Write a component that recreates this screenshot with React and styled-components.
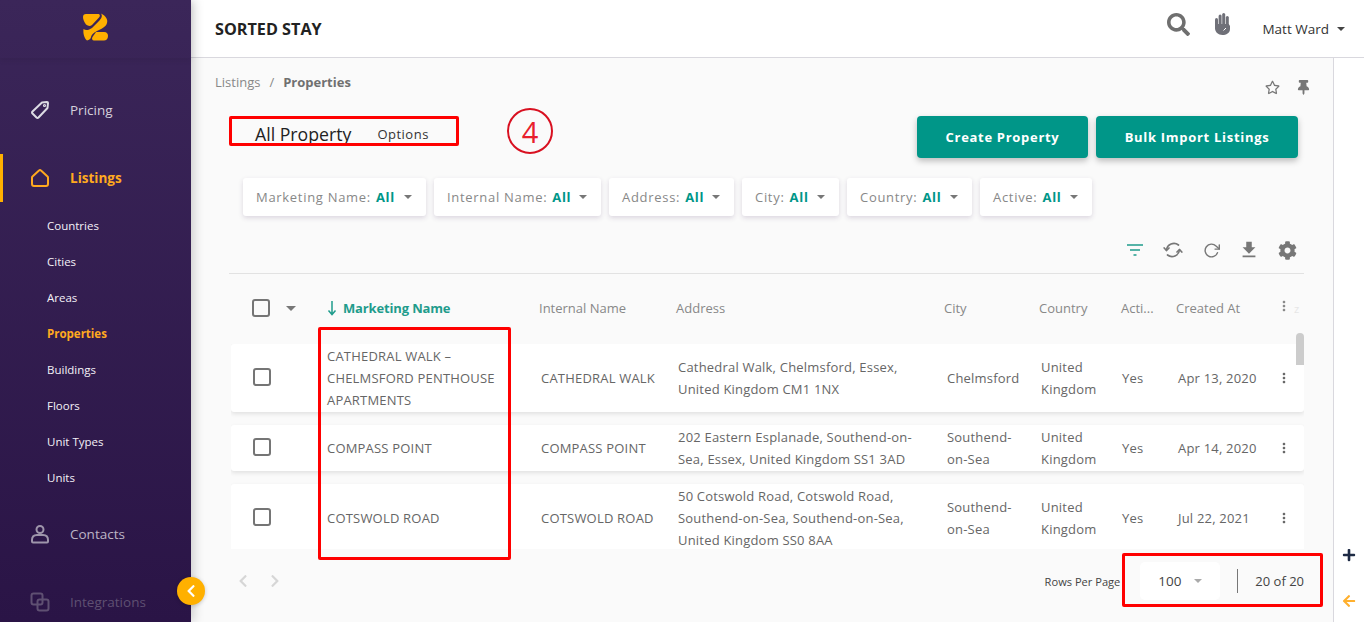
import React from 'react';
import styled, { createGlobalStyle } from 'styled-components';
import { FaSearch, FaRegStar, FaCog, FaPlus, FaArrowLeft, FaChevronLeft, FaChevronRight, FaThumbtack } from 'react-icons/fa';
import { FiRotateCw } from 'react-icons/fi';
import { MdFileDownload, MdMoreVert } from 'react-icons/md';

const GlobalStyle = createGlobalStyle`
  html, body { margin: 0; padding: 0; height: 100%; overflow: hidden; }
  body { font-family: "Open Sans", "Noto Sans", "Liberation Sans", sans-serif; background: #fafafa; color: #555; }
  * { box-sizing: border-box; }
`;

const Page = styled.div`
  display: flex;
  width: 1364px;
  height: 622px;
  position: relative;
  overflow: hidden;
`;

const Sidebar = styled.aside`
  position: relative;
  width: 191px;
  flex: none;
  background: linear-gradient(180deg, #3b2659 0%, #2a1446 100%);
  box-shadow: 3px 0 10px rgba(0, 0, 0, 0.18);
  z-index: 2;
`;

const LogoBar = styled.div`
  height: 58px;
  display: flex;
  justify-content: center;
  align-items: center;
  box-shadow: 0 2px 6px rgba(0, 0, 0, 0.08);
  padding-bottom: 4px;
`;

const NavMain = styled.div`
  display: flex;
  align-items: center;
  height: 48px;
  padding-left: ${p => (p.$active ? '27px' : '30px')};
  border-left: ${p => (p.$active ? '3px solid #ffb000' : 'none')};
  margin-top: ${p => p.$top}px;
  color: ${p => (p.$active ? '#ffa91f' : p.$dim ? '#5f5072' : '#d5d0dc')};
  font-weight: ${p => (p.$active ? 700 : 400)};
  font-size: 13.5px;
  opacity: ${p => (p.$soft ? 0.85 : 1)};
`;

const NavIcon = styled.span`
  display: flex;
  width: 40px;
  flex: none;
`;

const SubList = styled.div`
  display: flex;
  flex-direction: column;
  margin-top: 6px;
`;

const SubItem = styled.div`
  height: 36px;
  line-height: 36px;
  padding-left: 47px;
  font-size: 11.5px;
  font-weight: ${p => (p.$active ? 700 : 400)};
  color: ${p => (p.$active ? '#ffa91f' : '#f4f1f7')};
`;

const Collapse = styled.div`
  position: absolute;
  left: 177px;
  top: 577px;
  width: 28px;
  height: 28px;
  border-radius: 50%;
  background: #ffb000;
  color: #fff;
  display: flex;
  align-items: center;
  justify-content: center;
  box-shadow: 0 1px 4px rgba(0, 0, 0, 0.2);
  z-index: 3;
`;

const Main = styled.div`
  flex: 1;
  display: flex;
  flex-direction: column;
  min-width: 0;
`;

const Header = styled.header`
  height: 58px;
  flex: none;
  background: #fff;
  border-bottom: 1px solid #d9d8de;
  display: flex;
  align-items: center;
  padding: 0 19px 0 24px;
`;

const Brand = styled.div`
  font-size: 16.2px;
  font-weight: 700;
  color: #222;
  flex: 1;
`;

const HeaderIcon = styled.span`
  display: flex;
  color: #6f6f6f;
  margin-right: ${p => p.$gap}px;
  margin-top: ${p => p.$top}px;
`;

const User = styled.div`
  display: flex;
  align-items: center;
  font-size: 13.5px;
  color: #333;
  gap: 8px;
`;

const Caret = styled.span`
  flex: none;
  width: 0;
  height: 0;
  border-left: ${p => p.$size || 4}px solid transparent;
  border-right: ${p => p.$size || 4}px solid transparent;
  border-top: ${p => p.$size || 4}px solid ${p => p.$color || '#777'};
`;

const Body = styled.div`
  flex: 1;
  display: flex;
  min-height: 0;
`;

const Content = styled.div`
  flex: 1;
  min-width: 0;
  padding: 15px 29px 0 24px;
  display: flex;
  flex-direction: column;
  position: relative;
`;

const CrumbRow = styled.div`
  display: flex;
  justify-content: space-between;
  align-items: flex-start;
  height: 24px;
  font-size: 13px;
  color: #888;
`;

const Crumb = styled.div`
  b { color: #707070; font-weight: 700; }
  span { margin: 0 9px; }
`;

const PinBox = styled.div`
  display: flex;
  gap: 16px;
  align-items: center;
  color: #777;
  margin: 6px -7px 0 0;
  height: 16px;
`;

const TitleRow = styled.div`
  display: flex;
  justify-content: space-between;
  padding: 19px 6px 0 14px;
  height: 81px;
`;

const TitleGroup = styled.div`
  display: flex;
  align-items: flex-start;
  gap: 26px;
  padding: 6px 0 0 26px;
  height: 42px;
`;

const Title = styled.div`
  font-size: 17.7px;
  color: #222;
`;

const Options = styled.div`
  font-size: 13px;
  color: #333;
  letter-spacing: 0.5px;
  margin-top: 3px;
`;

const Actions = styled.div`
  display: flex;
  gap: 8px;
`;

const Primary = styled.button`
  width: ${p => p.$w}px;
  height: 42px;
  background: #009688;
  border: 0;
  border-radius: 4px;
  color: #fff;
  font: 700 13px "Open Sans", sans-serif;
  letter-spacing: 0.7px;
  box-shadow: 0 3px 6px rgba(0, 0, 0, 0.25);
`;

const Filters = styled.div`
  display: flex;
  gap: 8px;
  padding-left: 28px;
`;

const Chip = styled.div`
  height: 38px;
  width: ${p => p.$w}px;
  background: #fff;
  border-radius: 3px;
  box-shadow: 0 2px 5px rgba(60, 30, 90, 0.16);
  display: flex;
  align-items: center;
  justify-content: space-between;
  padding: 0 14px 0 13px;
  font-size: 13px;
  letter-spacing: 0.7px;
  color: #888;
  b { color: #009688; margin-left: 5px; }
`;

const Tools = styled.div`
  display: flex;
  justify-content: flex-end;
  align-items: center;
  gap: 4px;
  height: 58px;
  margin-left: 14px;
  padding-top: 11px;
  color: #777;
  border-bottom: 1px solid #e2e2e2;
`;

const Tool = styled.span`
  display: flex;
  justify-content: center;
  width: 34px;
`;

const COLS = '214px 137px 269px 94px 81px 56px 106px 1fr';

const HeadRow = styled.div`
  display: grid;
  grid-template-columns: 96px ${COLS};
  margin-left: 16px;
  height: 70px;
  align-items: center;
  font-size: 13px;
  color: #888;
  padding-bottom: 2px;
`;

const HeadCheck = styled.div`
  display: flex;
  align-items: center;
  gap: 16px;
  padding-left: 21px;
`;

const Box = styled.span`
  display: block;
  width: 18px;
  height: 18px;
  border: 2px solid #757575;
  border-radius: 3px;
  background: transparent;
`;

const SortHead = styled.div`
  display: flex;
  align-items: center;
  gap: 6px;
  color: #1f9c8c;
  font-weight: 700;
  letter-spacing: -0.15px;
`;

const HeadCell = styled.div`
  display: flex;
  align-items: center;
  margin-left: ${p => p.$left || 0}px;
  color: #888;
`;

const HeadDots = styled(MdMoreVert)`
  margin-bottom: 4px;
`;

const FaintSort = styled.span`
  color: #e6e6e6;
  font-size: 11px;
  margin-left: 2px;
`;

const Rows = styled.div`
  height: 205px;
  overflow: hidden;
  margin-left: 16px;
`;

const Row = styled.div`
  display: grid;
  grid-template-columns: 96px ${COLS};
  align-items: center;
  background: #fff;
  border-radius: 3px;
  box-shadow: 0 2px 4px rgba(0, 0, 0, 0.1);
  min-height: ${p => p.$h}px;
  margin-bottom: 13px;
  font-size: 13px;
  letter-spacing: 0.2px;
  line-height: 22px;
  color: #666;
`;

const CheckCell = styled.div`
  padding-left: 22px;
  margin-top: -2px;
`;

const RowDots = styled(MdMoreVert)`
  margin-left: -8px;
`;

const ScrollThumb = styled.div`
  position: absolute;
  right: 29px;
  top: 275px;
  width: 8px;
  height: 32px;
  background: #ccc;
  border-radius: 4px 4px 0 0;
`;

const Footer = styled.div`
  display: flex;
  align-items: center;
  margin-left: 16px;
  height: 54px;
  padding-top: 10px;
`;

const Pager = styled.div`
  display: flex;
  gap: 18px;
  color: #d6d6d6;
  flex: 1;
  padding-left: 5px;
`;

const RowsLabel = styled.div`
  font-size: 11.1px;
  color: #444;
  margin-right: 20px;
`;

const PageSelect = styled.div`
  width: 80px;
  height: 38px;
  background: #fff;
  border-radius: 5px;
  display: flex;
  align-items: center;
  padding-left: 18px;
  gap: 13px;
  font-size: 13.5px;
  color: #444;
`;

const Count = styled.div`
  margin-left: 17px;
  border-left: 1px solid #777;
  padding-left: 17px;
  height: 24px;
  line-height: 24px;
  font-size: 13px;
  color: #444;
`;

const Rail = styled.div`
  width: 31px;
  flex: none;
  border-left: 1px solid #d9d8de;
  background: #fff;
  display: flex;
  flex-direction: column;
  align-items: center;
  justify-content: flex-end;
  gap: 32px;
  padding-bottom: 14px;
`;

const Mark = styled.div`
  position: absolute;
  border: 3px solid #f00;
  border-radius: 2px;
  z-index: 4;
  pointer-events: none;
  left: ${p => p.$x}px;
  top: ${p => p.$y}px;
  width: ${p => p.$w}px;
  height: ${p => p.$h}px;
`;

const Circled = styled.div`
  position: absolute;
  left: 507px;
  top: 108px;
  width: 46px;
  height: 46px;
  border: 2px solid #d81020;
  border-radius: 50%;
  color: #e8202c;
  font-size: 29px;
  display: flex;
  align-items: center;
  justify-content: center;
  z-index: 4;
`;

const Logo = () => (
  <svg width="25" height="28" viewBox="0 0 25 28" fill="#ffb000">
    <path d="M3 1H15C17 1 17.500 3 16 4.500L9 12C7 13.500 5 13 3 11.500C1 9 0 6 0 4C0 2 1 1 3 1Z" />
    <path d="M18 .5C23 3 25 7 24 10C23 14 18 16 14 18C10 20 8.500 22 8 24C8 26 6 27 4 27.500C1 25 0 20 .5 16C3 18 6 17 9 15L16 8C18 6 20 3 18 .5Z" />
    <path d="M13 19H21C24 19 25 21 25 23C25 26 23 27.500 21 27.500H11C9 27.500 8.500 25.500 9.500 24Z" />
  </svg>
);

const TagIcon = () => (
  <svg width="20" height="20" viewBox="0 0 20 20" fill="none" stroke="#dcdce4" strokeWidth="2" strokeLinejoin="round">
    <path d="M12 2.500L17 2Q18 2 18 3L17.500 8L8.500 17.500Q7.500 18.500 6.500 17.500L2.500 13.500Q1.500 12.500 2.500 11.500Z" />
    <circle cx="14.500" cy="5.500" r=".6" />
  </svg>
);

const HomeIcon = () => (
  <svg width="20" height="20" viewBox="0 0 20 20" fill="none" stroke="#ffa91f" strokeWidth="2" strokeLinejoin="round">
    <path d="M2 16V9.500Q2 9 2.500 8.500L9 2.500Q10 1.500 11 2.500L17.500 8.500Q18 9 18 9.500V16Q18 18 16 18H4Q2 18 2 16Z" />
  </svg>
);

const ContactIcon = () => (
  <svg width="20" height="20" viewBox="0 0 20 20" fill="none" stroke="#b3acbd" strokeWidth="2">
    <circle cx="10" cy="5.500" r="3.500" />
    <path d="M2 16c0-3 2-5 5-5h6c3 0 5 2 5 5v1.500q0 1-1 1H3q-1 0-1-1z" />
  </svg>
);

const LinkIcon = () => (
  <svg width="20" height="20" viewBox="0 0 20 20" fill="none" stroke="#5f5072" strokeWidth="2">
    <rect x="1.500" y="1.500" width="11" height="11" rx="2" />
    <rect x="7.500" y="7.500" width="11" height="11" rx="2" />
  </svg>
);

const HandIcon = () => (
  <svg width="15" height="22" viewBox="0 0 15 22" fill="#6f7078">
    <rect x="0" y="5" width="3" height="11" rx="1.500" />
    <rect x="3.600" y="1.500" width="3" height="13" rx="1.500" />
    <rect x="7.200" y="0" width="3" height="14" rx="1.500" />
    <rect x="10.800" y="3" width="3" height="12" rx="1.500" />
    <path d="M0 11H13.800L15 13V16C15 20 11 22 7.500 22C3 22 0 19 0 15Z" />
    <path d="M8.500 17.500L11 15" stroke="#fff" strokeWidth="1" />
  </svg>
);

const FilterLines = () => (
  <svg width="18" height="14" viewBox="0 0 18 14" stroke="#1f9c8c" strokeWidth="1.500">
    <path d="M1 2h16M4 7h10M7.500 12h3" />
  </svg>
);

const SyncIcon = () => (
  <svg width="20" height="20" viewBox="0 0 20 20" fill="none" stroke="#777" strokeWidth="1.700" strokeLinecap="round" strokeLinejoin="round">
    <path d="M15.500 5A7.500 7.500 0 0 0 3.500 10" />
    <path d="M1.200 8L3.500 10.500L6 8" />
    <path d="M4.500 15A7.500 7.500 0 0 0 16.500 10" />
    <path d="M14 12L16.500 9.500L18.800 12" />
  </svg>
);

const filters = [
  ['Marketing Name:', 183],
  ['Internal Name:', 167],
  ['Address:', 125],
  ['City:', 97],
  ['Country:', 125],
  ['Active:', 112],
];

const rows = [
  {
    h: 68,
    name: ['CATHEDRAL WALK –', 'CHELMSFORD PENTHOUSE', 'APARTMENTS'],
    internal: 'CATHEDRAL WALK',
    address: ['Cathedral Walk, Chelmsford, Essex,', 'United Kingdom CM1 1NX'],
    city: ['Chelmsford'],
    created: 'Apr 13, 2020',
  },
  {
    h: 46,
    name: ['COMPASS POINT'],
    internal: 'COMPASS POINT',
    address: ['202 Eastern Esplanade, Southend-on-', 'Sea, Essex, United Kingdom SS1 3AD'],
    city: ['Southend-', 'on-Sea'],
    created: 'Apr 14, 2020',
  },
  {
    h: 68,
    name: ['COTSWOLD ROAD'],
    internal: 'COTSWOLD ROAD',
    address: ['50 Cotswold Road, Cotswold Road,', 'Southend-on-Sea, Southend-on-Sea,', 'United Kingdom SS0 8AA'],
    city: ['Southend-', 'on-Sea'],
    created: 'Jul 22, 2021',
  },
];

const Lines = ({ items }) => (
  <div>
    {items.map(t => (
      <div key={t}>{t}</div>
    ))}
  </div>
);

export default function App() {
  return (
    <Page>
      <GlobalStyle />
      <Sidebar>
        <LogoBar><Logo /></LogoBar>
        <NavMain $top={28}><NavIcon><TagIcon /></NavIcon>Pricing</NavMain>
        <NavMain $top={20} $active><NavIcon><HomeIcon /></NavIcon>Listings</NavMain>
        <SubList>
          <SubItem>Countries</SubItem>
          <SubItem>Cities</SubItem>
          <SubItem>Areas</SubItem>
          <SubItem $active>Properties</SubItem>
          <SubItem>Buildings</SubItem>
          <SubItem>Floors</SubItem>
          <SubItem>Unit Types</SubItem>
          <SubItem>Units</SubItem>
        </SubList>
        <NavMain $top={14} $soft><NavIcon><ContactIcon /></NavIcon>Contacts</NavMain>
        <NavMain $top={20} $dim><NavIcon><LinkIcon /></NavIcon>Integrations</NavMain>
      </Sidebar>
      <Collapse><FaChevronLeft size={14} /></Collapse>

      <Main>
        <Header>
          <Brand>SORTED STAY</Brand>
          <HeaderIcon $gap={25} $top={-8}><FaSearch size={23} /></HeaderIcon>
          <HeaderIcon $gap={32} $top={-9}><HandIcon /></HeaderIcon>
          <User>Matt Ward <Caret $color="#444" /></User>
        </Header>
        <Body>
          <Content>
            <CrumbRow>
              <Crumb>Listings<span>/</span><b>Properties</b></Crumb>
              <PinBox>
                <FaRegStar size={15} />
                <FaThumbtack size={15} />
              </PinBox>
            </CrumbRow>
            <TitleRow>
              <TitleGroup>
                <Title>All Property</Title>
                <Options>Options</Options>
              </TitleGroup>
              <Actions>
                <Primary $w={171}>Create Property</Primary>
                <Primary $w={202}>Bulk Import Listings</Primary>
              </Actions>
            </TitleRow>
            <Filters>
              {filters.map(([label, width]) => (
                <Chip key={label} $w={width}>
                  <span>{label}<b>All</b></span>
                  <Caret />
                </Chip>
              ))}
            </Filters>
            <Tools>
              <Tool><FilterLines /></Tool>
              <Tool><SyncIcon /></Tool>
              <Tool><FiRotateCw size={17} /></Tool>
              <Tool><MdFileDownload size={22} /></Tool>
              <Tool><FaCog size={19} /></Tool>
            </Tools>
            <HeadRow>
              <HeadCheck><Box /><Caret $size={5} /></HeadCheck>
              <SortHead>
                <svg width="10" height="16" viewBox="0 0 10 16" fill="none" stroke="#1f9c8c" strokeWidth="1.500">
                  <path d="M5 1v13M1.500 10.500L5 14.500l3.500-4" />
                </svg>
                Marketing Name
              </SortHead>
              <HeadCell $left={-2}>Internal Name</HeadCell>
              <HeadCell $left={-2}>Address</HeadCell>
              <HeadCell $left={-3}>City</HeadCell>
              <HeadCell $left={-2}>Country</HeadCell>
              <HeadCell $left={-1}>Acti...</HeadCell>
              <HeadCell $left={-2}>Created At</HeadCell>
              <HeadCell $left={-8}><HeadDots size={16} /><FaintSort>z</FaintSort></HeadCell>
            </HeadRow>
            <Rows>
              {rows.map(r => (
                <Row key={r.internal} $h={r.h}>
                  <CheckCell><Box /></CheckCell>
                  <Lines items={r.name} />
                  <div>{r.internal}</div>
                  <Lines items={r.address} />
                  <Lines items={r.city} />
                  <Lines items={['United', 'Kingdom']} />
                  <div>Yes</div>
                  <div>{r.created}</div>
                  <RowDots size={16} />
                </Row>
              ))}
            </Rows>
            <ScrollThumb />
            <Footer>
              <Pager><FaChevronLeft size={14} /><FaChevronRight size={14} /></Pager>
              <RowsLabel>Rows Per Page</RowsLabel>
              <PageSelect>100 <Caret $color="#aaa" /></PageSelect>
              <Count>20 of 20</Count>
            </Footer>
          </Content>
          <Rail>
            <FaPlus size={14} color="#1d2a44" />
            <FaArrowLeft size={14} color="#ffb02e" />
          </Rail>
        </Body>
      </Main>

      <Mark $x={229} $y={116} $w={230} $h={30} />
      <Mark $x={318} $y={327} $w={193} $h={233} />
      <Mark $x={1122} $y={553} $w={201} $h={54} />
      <Circled>4</Circled>
    </Page>
  );
}
